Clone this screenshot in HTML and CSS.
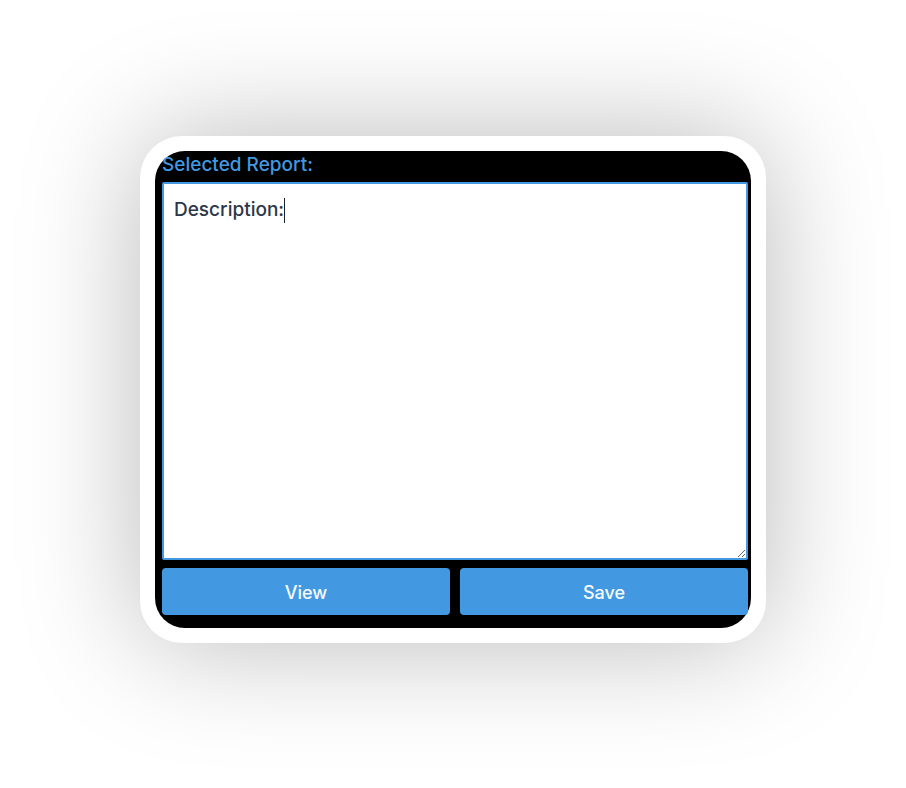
FILE: index.html
```html
<!DOCTYPE html>
<html lang="en">
<head>
<meta charset="utf-8">
<title>Selected Report</title>
<link rel="stylesheet" href="styles.css">
</head>
<body>
<div class="stage">
  <div class="card">
    <div class="panel">
      <label class="label" for="desc">Selected Report:</label>
      <div class="field">
        <textarea id="desc" class="desc">Description:</textarea>
        <span class="caret"></span>
      </div>
      <div class="actions">
        <button class="btn" type="button">View</button>
        <button class="btn" type="button">Save</button>
      </div>
    </div>
  </div>
</div>
</body>
</html>
```
FILE: styles.css
```css
html, body {
  margin: 0;
  padding: 0;
  background: #ffffff;
}
.stage {
  width: 906px;
  height: 788px;
  display: flex;
  justify-content: center;
  padding-top: 136px;
  box-sizing: border-box;
}
.card {
  width: 626px;
  height: 507px;
  box-sizing: border-box;
  padding: 15px;
  background: #ffffff;
  border-radius: 42px;
  box-shadow: 0 0 120px rgba(0, 0, 0, 0.28);
}
.panel {
  height: 100%;
  box-sizing: border-box;
  background: #000000;
  border-radius: 30px;
  padding: 0 3px 0 7px;
  display: flex;
  flex-direction: column;
  font-family: Inter, "Liberation Sans", sans-serif;
}
.label {
  display: block;
  color: #4299e1;
  font-size: 19px;
  font-weight: 500;
  line-height: 27px;
  height: 31px;
}
.field {
  position: relative;
  width: 586px;
  height: 378px;
}
.desc {
  display: block;
  width: 586px;
  height: 378px;
  box-sizing: border-box;
  margin: 0;
  border: 2px solid #4299e1;
  border-radius: 2px;
  padding: 12px 10px 10px;
  font-family: Inter, "Liberation Sans", sans-serif;
  font-size: 19px;
  line-height: 27px;
  font-weight: 500;
  color: #2d3748;
  background: #ffffff;
  outline: none;
  resize: vertical;
}
.caret {
  position: absolute;
  left: 122px;
  top: 16px;
  width: 1px;
  height: 25px;
  background: #1a202c;
}
.actions {
  display: grid;
  grid-template-columns: 288px 288px;
  gap: 10px;
  margin-top: 8px;
}
.btn {
  height: 47px;
  border: none;
  border-radius: 4px;
  background: #4299e1;
  color: #f7fafc;
  font-family: Inter, "Liberation Sans", sans-serif;
  font-size: 18px;
  font-weight: 500;
  padding: 1px 0 0;
}
```
